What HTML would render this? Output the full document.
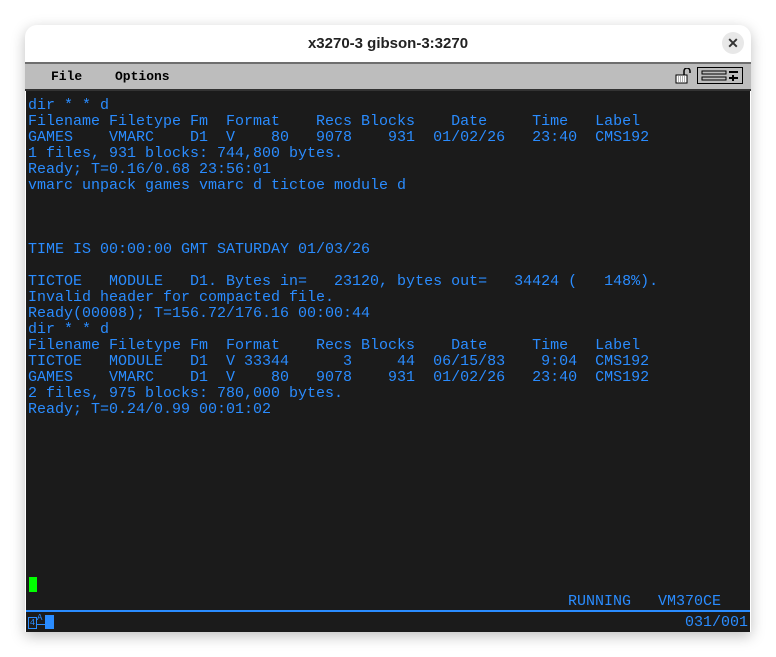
<!DOCTYPE html>
<html><head><meta charset="utf-8"><style>
body{margin:0;width:776px;height:657px;background:#fff;position:relative;overflow:hidden;font-family:"Liberation Sans",sans-serif}
.win{position:absolute;left:25px;top:25px;width:726px;height:607px;border-radius:12px 12px 0 0;background:#fff;box-shadow:0 4px 14px rgba(0,0,0,.25);overflow:hidden}
.title{position:absolute;left:0;top:0;width:726px;height:37px;text-align:center;line-height:37px;font-weight:bold;font-size:15px;color:#222}
.close{position:absolute;left:697px;top:7px;width:22px;height:22px;border-radius:50%;background:#e8e8e8;text-align:center;line-height:22px;font-size:14px;font-weight:bold;color:#333}
.menu{position:absolute;left:0;top:37px;width:726px;height:29px;background:#bdbdbd;border-top:2px solid #6e6e6e;border-bottom:2px solid #333;box-sizing:border-box}
.menu span{position:absolute;top:5px;font-family:"Liberation Mono",monospace;font-weight:bold;font-size:13px;color:#000}
.term{position:absolute;left:1px;top:66px;width:724px;height:541px;background:#1b1b1b}
.r{position:absolute;left:2px;font-family:"Liberation Mono",monospace;font-size:15px;line-height:16px;white-space:pre;color:#2a8cff}
</style></head><body>
<div class="win">
<div class="title">x3270-3 gibson-3:3270</div>
<div class="close">✕</div>
<div class="menu"><span style="left:26px">File</span><span style="left:90px">Options</span>
<svg style="position:absolute;left:650px;top:4px" width="18" height="16" viewBox="0 0 18 16"><path d="M9 7V3a3 3 0 0 1 6 0v2" fill="none" stroke="#000" stroke-width="1.5"/><rect x="1" y="7" width="11" height="8" fill="#fff" stroke="#000"/><path d="M3 9h7M3 11h7M3 13h7" stroke="#666" stroke-dasharray="1 1"/></svg>
<div style="position:absolute;left:672px;top:3px;width:46px;height:17px;border:1.5px solid #000;box-sizing:border-box"></div>
<svg style="position:absolute;left:676px;top:6px" width="40" height="12" viewBox="0 0 40 12"><rect x="1" y="1" width="24" height="3" fill="none" stroke="#000" stroke-width="1"/><rect x="1" y="7" width="24" height="3" fill="none" stroke="#000" stroke-width="1"/><path d="M28 2h9M28 8h9M32 5v6" stroke="#000" stroke-width="2"/></svg>
</div>
<div class="term">
<div class="r" style="top:7px">dir * * d</div>
<div class="r" style="top:23px">Filename Filetype Fm  Format    Recs Blocks    Date     Time   Label</div>
<div class="r" style="top:39px">GAMES    VMARC    D1  V    80   9078    931  01/02/26   23:40  CMS192</div>
<div class="r" style="top:55px">1 files, 931 blocks: 744,800 bytes.</div>
<div class="r" style="top:71px">Ready; T=0.16/0.68 23:56:01</div>
<div class="r" style="top:87px">vmarc unpack games vmarc d tictoe module d</div>
<div class="r" style="top:151px">TIME IS 00:00:00 GMT SATURDAY 01/03/26</div>
<div class="r" style="top:183px">TICTOE   MODULE   D1. Bytes in=   23120, bytes out=   34424 (   148%).</div>
<div class="r" style="top:199px">Invalid header for compacted file.</div>
<div class="r" style="top:215px">Ready(00008); T=156.72/176.16 00:00:44</div>
<div class="r" style="top:231px">dir * * d</div>
<div class="r" style="top:247px">Filename Filetype Fm  Format    Recs Blocks    Date     Time   Label</div>
<div class="r" style="top:263px">TICTOE   MODULE   D1  V 33344      3     44  06/15/83    9:04  CMS192</div>
<div class="r" style="top:279px">GAMES    VMARC    D1  V    80   9078    931  01/02/26   23:40  CMS192</div>
<div class="r" style="top:295px">2 files, 975 blocks: 780,000 bytes.</div>
<div class="r" style="top:311px">Ready; T=0.24/0.99 00:01:02</div>
<div style="position:absolute;left:3px;top:486px;width:8px;height:15px;background:#00ff00"></div>
<div class="r" style="top:503px;left:542px">RUNNING   VM370CE</div>
<div style="position:absolute;left:0;top:519px;width:724px;height:2px;background:#2a8cff"></div>
<div style="position:absolute;left:2px;top:526px;width:9px;height:12px;border:1px solid #2a8cff;box-sizing:border-box;color:#2a8cff;font:9px 'Liberation Mono',monospace;line-height:10px;text-align:center">4</div>
<div style="position:absolute;left:11px;top:522px;color:#2a8cff;font:9px 'Liberation Mono',monospace">A</div>
<div style="position:absolute;left:11px;top:533px;width:8px;height:1px;background:#2a8cff"></div>
<div style="position:absolute;left:19px;top:524px;width:9px;height:14px;background:#2a8cff"></div>
<div class="r" style="top:524px;left:659px">031/001</div>
</div>
</div>
</body></html>
